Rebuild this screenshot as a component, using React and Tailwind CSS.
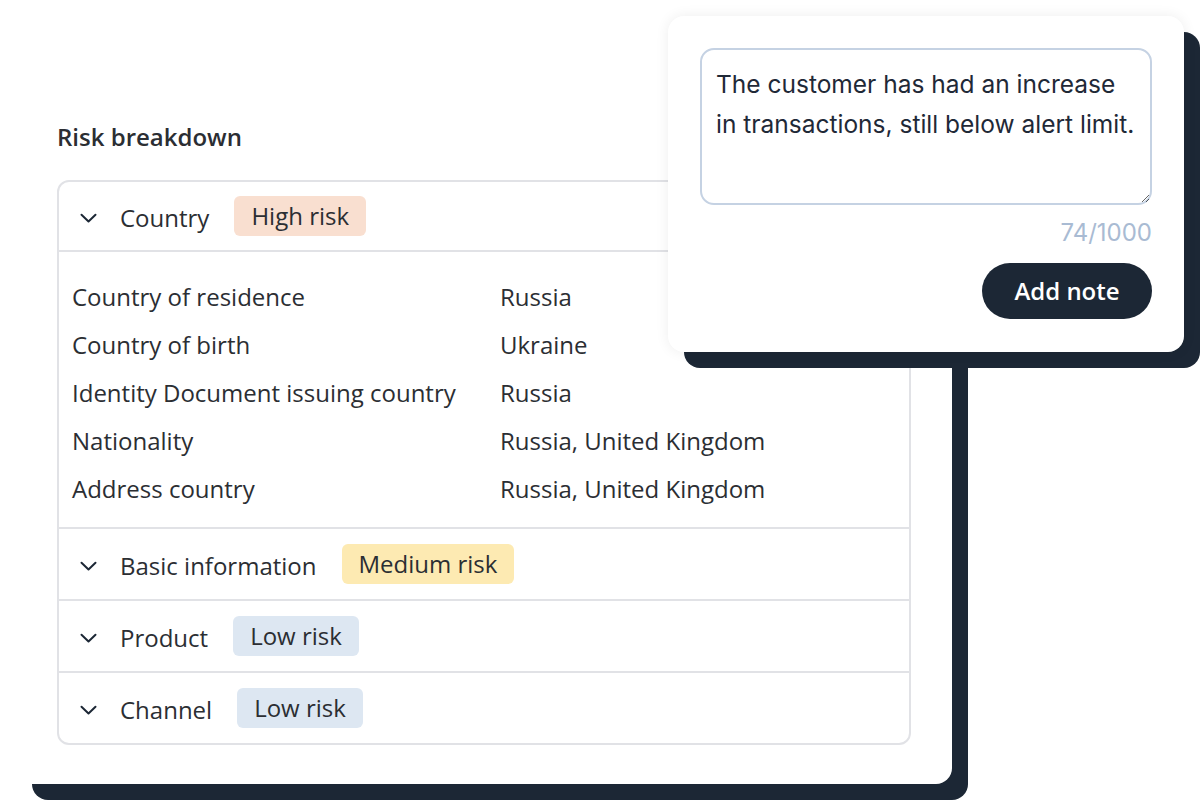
import React from "react";

const Chevron = () => (
  <svg width="17" height="10" viewBox="0 0 17 10" fill="none" className="shrink-0">
    <path d="M1.5 1.8L8.5 8.5L15.5 1.8" stroke="#1c2735" strokeWidth="2" strokeLinecap="round" strokeLinejoin="round" />
  </svg>
);

const Badge = ({ children, tone }) => {
  const cls =
    tone === "high"
      ? "bg-[#f9dfd0]"
      : tone === "medium"
      ? "bg-[#fdeab2]"
      : "bg-[#dde7f2]";
  return (
    <span className={`${cls} h-[40px] px-[17px] rounded-[6px] flex items-center text-[24px] text-[#2b2e33]`}>
      {children}
    </span>
  );
};

const Header = ({ label, tone, risk, border }) => (
  <div className={`h-[72px] flex items-center pl-[21px] ${border ? "border-t-2 border-[#e1e2e6]" : ""}`}>
    <div className="w-[17px] flex items-center mt-[4px]">
      <Chevron />
    </div>
    <span className="ml-[23px] text-[24px] text-[#2b2e33] mt-[3px]">{label}</span>
    <span className="ml-[25px]">
      <Badge tone={tone}>{risk}</Badge>
    </span>
  </div>
);

const rows = [
  ["Country of residence", "Russia"],
  ["Country of birth", "Ukraine"],
  ["Identity Document issuing country", "Russia"],
  ["Nationality", "Russia, United Kingdom"],
  ["Address country", "Russia, United Kingdom"],
];

export default function App() {
  return (
    <div className="relative w-[1200px] h-[800px] overflow-hidden bg-white" style={{ fontFamily: '"Open Sans", "Noto Sans", sans-serif' }}>
      <div className="ml-[16px] w-[936px] h-[784px] rounded-[16px] bg-white shadow-[16px_16px_0_0_#1c2735] px-[41px] pt-[121px]">
        <h2 className="text-[24px] leading-[32px] font-semibold text-[#2b2e33]">Risk breakdown</h2>
        <div className="mt-[27px] border-2 border-[#e1e2e6] rounded-[12px]">
          <div className="h-[68px] flex items-center pl-[21px]">
            <div className="w-[17px] flex items-center mt-[4px]">
              <Chevron />
            </div>
            <span className="ml-[23px] text-[24px] text-[#2b2e33] mt-[3px]">Country</span>
            <span className="ml-[25px]">
              <Badge tone="high">High risk</Badge>
            </span>
          </div>
          <div className="border-t-2 border-[#e1e2e6] pt-[21px] pb-[14px] pl-[13px]">
            {rows.map(([k, v]) => (
              <div key={k} className="h-[48px] flex items-center text-[24px] text-[#2b2e33]">
                <span className="w-[428px]">{k}</span>
                <span>{v}</span>
              </div>
            ))}
          </div>
          <Header label="Basic information" tone="medium" risk="Medium risk" border />
          <Header label="Product" tone="low" risk="Low risk" border />
          <Header label="Channel" tone="low" risk="Low risk" border />
        </div>
      </div>

      <div className="absolute left-[668px] top-[16px] w-[516px] h-[336px] rounded-[16px] bg-white shadow-[0_0_14px_0_rgba(0,0,0,0.07),16px_16px_0_0_#1c2735] px-[32px] pt-[32px] flex flex-col items-end">
        <textarea
          readOnly
          value={"The customer has had an increase\nin transactions, still below alert limit."}
          className="w-[452px] h-[157px] border-2 border-[#c5d2e3] rounded-[14px] pl-[14px] pr-[2px] pt-[14px] text-[24.5px] leading-[40px] text-[#1f2937] outline-none"
          style={{ fontFamily: 'Inter, "Noto Sans", sans-serif' }}
        />
        <div className="mt-[14px] text-[24px] leading-[28px] text-[#a9bbd3]" style={{ fontFamily: 'Inter, sans-serif' }}>
          74/1000
        </div>
        <button className="mt-[16px] h-[56px] w-[170px] rounded-full bg-[#1c2735] text-white text-[24px] font-semibold flex items-center justify-center">
          Add note
        </button>
      </div>
    </div>
  );
}
